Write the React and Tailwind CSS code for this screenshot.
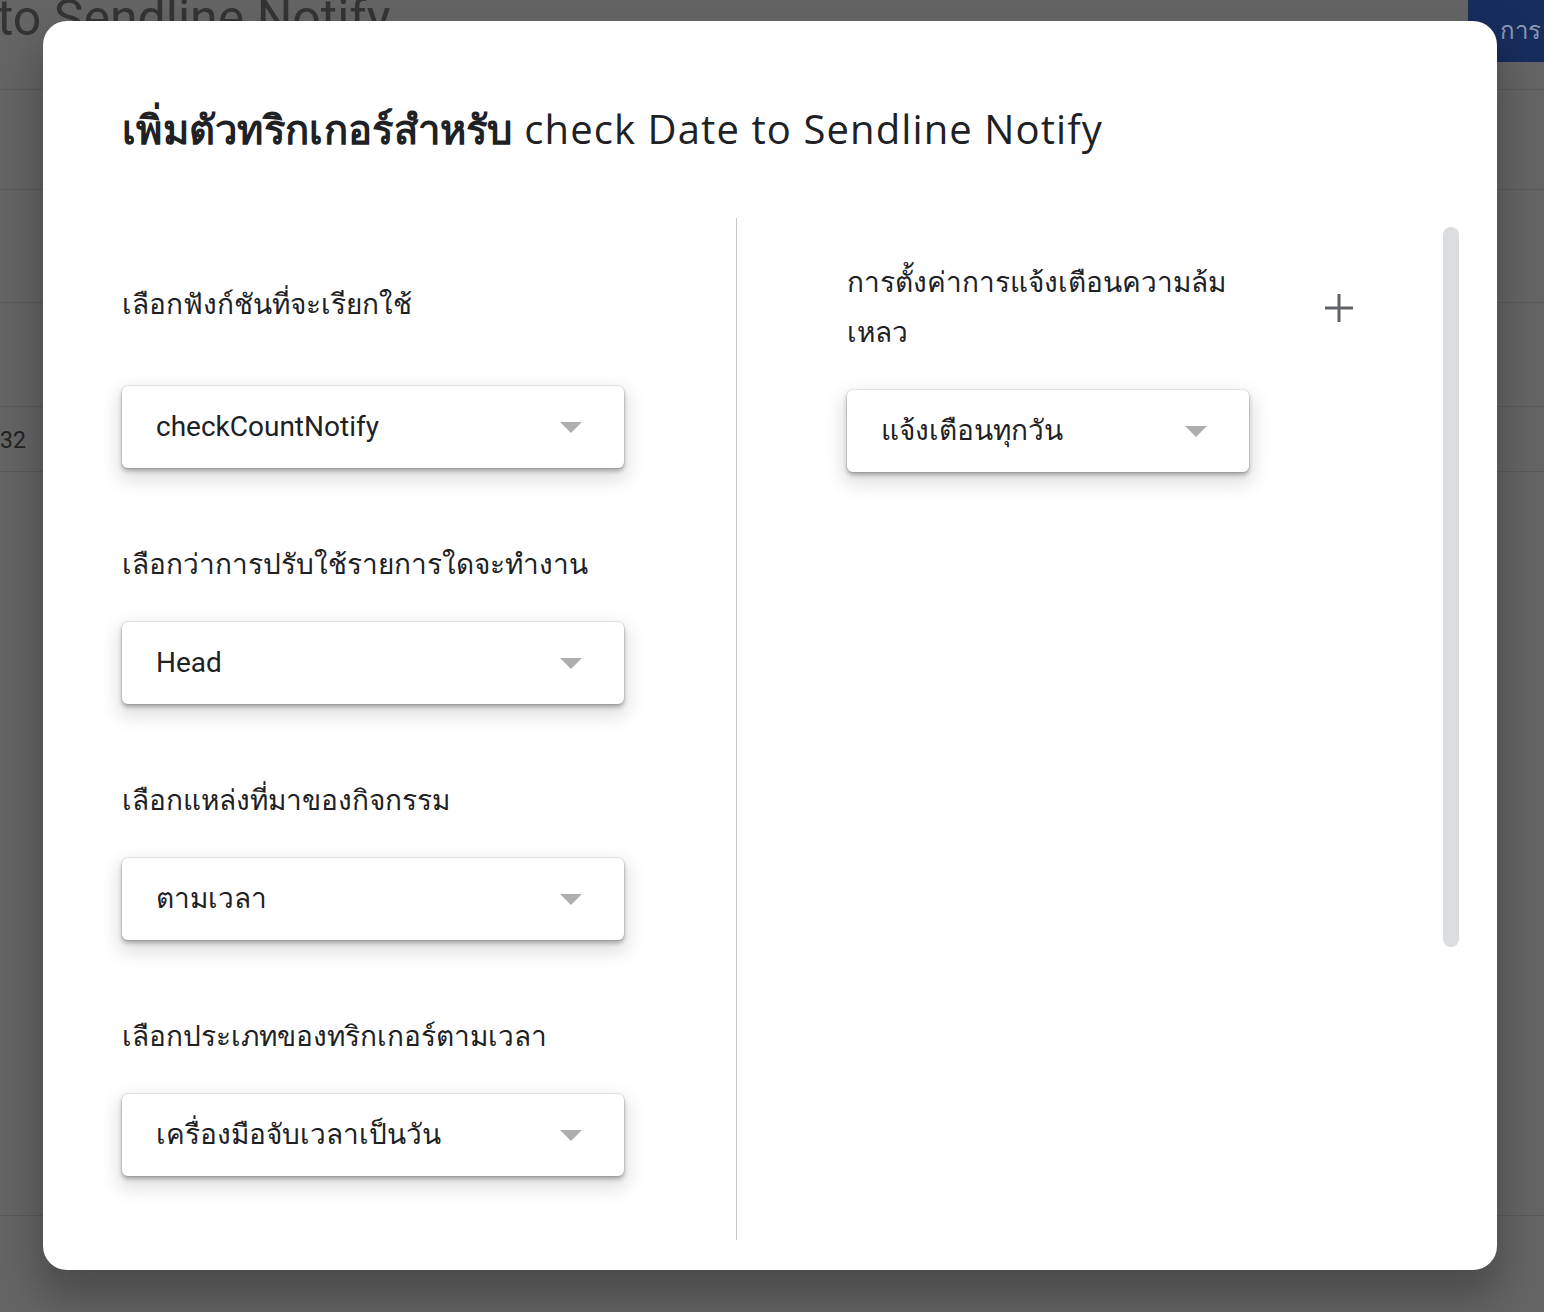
import { useState } from "react";

const fields = [
  { label: "เลือกฟังก์ชันที่จะเรียกใช้", value: "checkCountNotify" },
  { label: "เลือกว่าการปรับใช้รายการใดจะทำงาน", value: "Head" },
  { label: "เลือกแหล่งที่มาของกิจกรรม", value: "ตามเวลา" },
  { label: "เลือกประเภทของทริกเกอร์ตามเวลา", value: "เครื่องมือจับเวลาเป็นวัน" },
];

const Caret = () => (
  <svg width="22" height="11" viewBox="0 0 22 11" className="shrink-0">
    <path d="M0 0h22L11 11z" fill="#aeaeae" />
  </svg>
);

const Select = ({ value, width }) => (
  <button
    type="button"
    className={`flex h-[82px] items-center justify-between rounded-[6px] bg-white pl-[34px] pr-[42px] text-left text-[28px] text-[#202124] shadow-[0_0_0_1px_rgba(60,64,67,0.1),0_3px_4px_rgba(60,64,67,0.4),0_8px_18px_4px_rgba(60,64,67,0.16)] ${width}`}
  >
    <span>{value}</span>
    <Caret />
  </button>
);

const App = () => {
  const [open] = useState(true);

  return (
    <div className="relative h-[1312px] w-full overflow-hidden bg-[#656565] font-['Roboto','Noto_Sans',sans-serif]">
      {/* page behind the dialog */}
      <div className="flex h-[90px] items-start justify-between border-b border-[#5a5a5a]">
        <div className="-ml-[3px] -mt-[12px] text-[50px] leading-[60px] text-[#343434]">
          to Sendline Notify
        </div>
        <div className="flex h-[62px] w-[76px] items-center pl-[32px] text-[24px] text-[#8c9ab3] bg-[#172d5c]">
          การ
        </div>
      </div>
      <div className="h-[100px] border-b border-[#5a5a5a]" />
      <div className="h-[113px] border-b border-[#5a5a5a]" />
      <div className="h-[104px] border-b border-[#5a5a5a]" />
      <div className="flex h-[65px] items-center border-b border-[#5a5a5a] pt-[4px] text-[23px] text-[#222]">
        32
      </div>
      <div className="h-[744px] border-b border-[#5a5a5a]" />

      {open && (
        <div className="absolute left-[43px] top-[21px] flex h-[1249px] w-[1454px] flex-col rounded-[24px] bg-white pl-[79px] pt-[84px] shadow-[0_24px_40px_6px_rgba(0,0,0,0.25)]">
          <h1 className="whitespace-nowrap text-[40px] leading-[48px] text-[#202124] font-['Open_Sans','Roboto',sans-serif] font-medium">
            <span className="font-semibold tracking-[0.3px]">เพิ่มตัวทริกเกอร์สำหรับ</span>
            <span className="tracking-[1.1px]"> check Date to Sendline Notify</span>
          </h1>

          <div className="mt-[65px] flex h-[1022px]">
            <div className="w-[614px] pt-[62px]">
              {fields.map((f, i) => (
                <div key={f.label} className={i === 0 ? "" : "mt-[72px]"}>
                  <div className="h-[50px] text-[28px] leading-[50px] text-[#202124]">
                    {f.label}
                  </div>
                  <div className={i === 0 ? "mt-[56px]" : "mt-[32px]"}>
                    <Select value={f.value} width="w-[502px]" />
                  </div>
                </div>
              ))}
            </div>

            <div className="w-px bg-[#c7c7c7]" />

            <div className="flex flex-1 pl-[110px]">
              <div className="pt-[40px]">
                <div className="flex items-center">
                  <div className="w-[400px] text-[28px] leading-[50px] text-[#202124]">
                    การตั้งค่าการแจ้งเตือนความล้มเหลว
                  </div>
                  <svg width="30" height="30" viewBox="0 0 30 30" className="ml-[77px]">
                    <path d="M15 1v28M1 15h28" stroke="#5f6368" strokeWidth="3" />
                  </svg>
                </div>
                <div className="mt-[32px]">
                  <Select value="แจ้งเตือนทุกวัน" width="w-[402px]" />
                </div>
              </div>
              <div className="ml-auto mr-[38px] mt-[9px] h-[720px] w-[16px] rounded-full bg-[#dadce0]" />
            </div>
          </div>
        </div>
      )}
    </div>
  );
};

export default App;
